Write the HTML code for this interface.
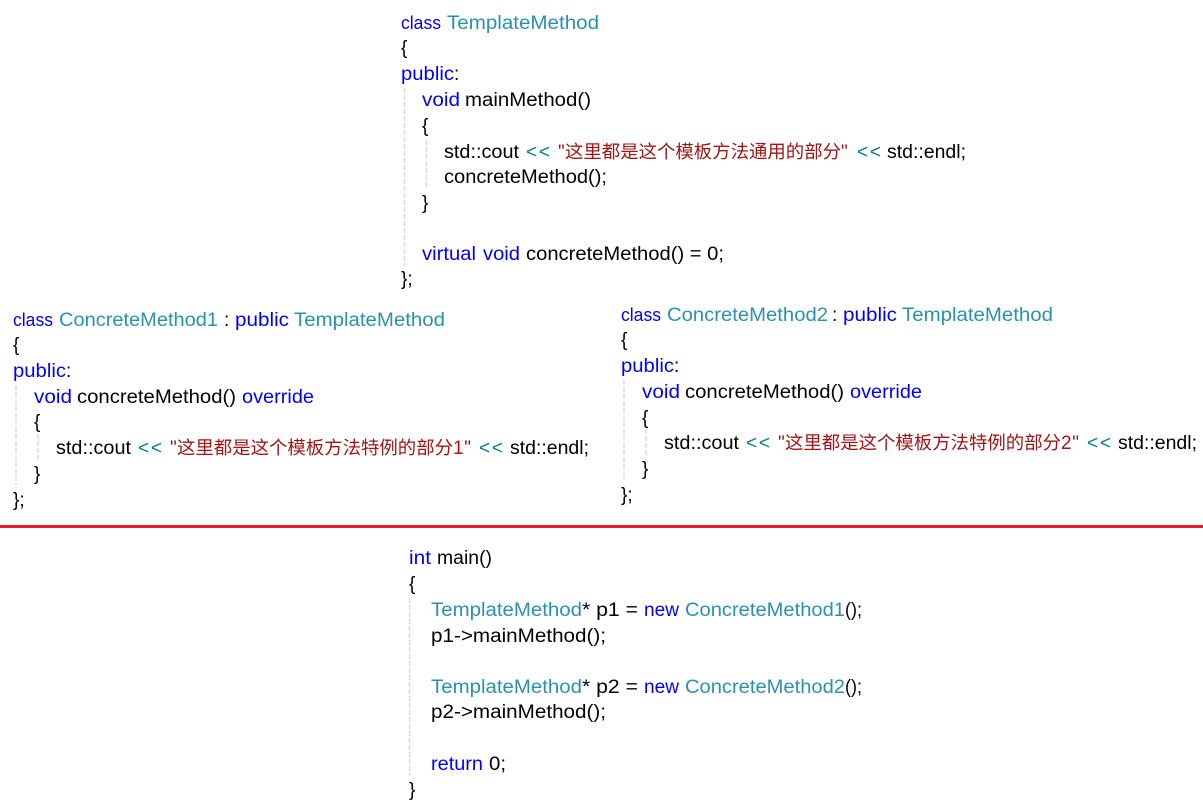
<!DOCTYPE html>
<html lang="zh-CN">
<head>
<meta charset="utf-8">
<title>Template Method</title>
<style>
html,body{margin:0;padding:0;background:#fff;width:1203px;height:811px;overflow:hidden}
svg{display:block}
text{font-family:"Liberation Sans","Noto Sans CJK SC",sans-serif;font-size:19px;white-space:pre;fill:#000}
.k{fill:#0000ff}
.n{fill:#0000ff;font-size:18.5px}
.t{fill:#2b91af}
.s{fill:#a31515}
.c{fill:#a31515;font-size:18.4px}
.o{fill:#008080}
line.g{stroke:#dadada;stroke-width:1.5;stroke-dasharray:5 2}
</style>
</head>
<body>
<svg width="1203" height="811" viewBox="0 0 1203 811" xmlns="http://www.w3.org/2000/svg">
<rect x="0" y="525" width="1203" height="3" fill="#ed1c24"/>

<!-- guides -->
<line class="g" x1="404.5" y1="88" x2="404.5" y2="266"/>
<line class="g" x1="426.5" y1="140" x2="426.5" y2="189"/>
<line class="g" x1="16" y1="385" x2="16" y2="485"/>
<line class="g" x1="38" y1="434" x2="38" y2="460"/>
<line class="g" x1="624" y1="380" x2="624" y2="480"/>
<line class="g" x1="646" y1="429" x2="646" y2="455"/>
<line class="g" x1="409.5" y1="598" x2="409.5" y2="776"/>

<!-- block 1 -->
<text class="n" x="401" y="29" textLength="40" lengthAdjust="spacingAndGlyphs">class</text>
<text class="t" x="447" y="29" textLength="152" lengthAdjust="spacingAndGlyphs">TemplateMethod</text>
<text x="401" y="54">{</text>
<text class="k" x="401" y="80" textLength="53" lengthAdjust="spacingAndGlyphs">public</text>
<text x="454" y="80">:</text>
<text class="k" x="422" y="106" textLength="38" lengthAdjust="spacingAndGlyphs">void</text>
<text x="465" y="106" textLength="126" lengthAdjust="spacingAndGlyphs">mainMethod()</text>
<text x="422" y="132">{</text>
<text x="444" y="158" textLength="75" lengthAdjust="spacingAndGlyphs">std::cout</text>
<text class="o" x="526" y="158" textLength="24" lengthAdjust="spacing">&lt;&lt;</text>
<text class="s" x="558" y="158">"</text>
<text class="c" x="565" y="158" textLength="276" lengthAdjust="spacing">这里都是这个模板方法通用的部分</text>
<text class="s" x="841" y="158">"</text>
<text class="o" x="857" y="158" textLength="24" lengthAdjust="spacing">&lt;&lt;</text>
<text x="887" y="158" textLength="79" lengthAdjust="spacingAndGlyphs">std::endl;</text>
<text x="444" y="183" textLength="163" lengthAdjust="spacingAndGlyphs">concreteMethod();</text>
<text x="422" y="209">}</text>
<text class="k" x="422" y="260" textLength="54" lengthAdjust="spacingAndGlyphs">virtual</text>
<text class="k" x="483" y="260" textLength="37" lengthAdjust="spacingAndGlyphs">void</text>
<text x="526" y="260" textLength="198" lengthAdjust="spacingAndGlyphs">concreteMethod() = 0;</text>
<text x="401" y="285">};</text>

<!-- block 2 -->
<text class="n" x="13" y="326" textLength="40" lengthAdjust="spacingAndGlyphs">class</text>
<text class="t" x="59" y="326" textLength="159" lengthAdjust="spacingAndGlyphs">ConcreteMethod1</text>
<text x="224" y="326">:</text>
<text class="k" x="235" y="326" textLength="54" lengthAdjust="spacingAndGlyphs">public</text>
<text class="t" x="294" y="326" textLength="151" lengthAdjust="spacingAndGlyphs">TemplateMethod</text>
<text x="13" y="351">{</text>
<text class="k" x="13" y="377" textLength="53" lengthAdjust="spacingAndGlyphs">public</text>
<text x="66" y="377">:</text>
<text class="k" x="34" y="403" textLength="38" lengthAdjust="spacingAndGlyphs">void</text>
<text x="77" y="403" textLength="159" lengthAdjust="spacingAndGlyphs">concreteMethod()</text>
<text class="k" x="242" y="403" textLength="72" lengthAdjust="spacingAndGlyphs">override</text>
<text x="34" y="428">{</text>
<text x="56" y="454" textLength="75" lengthAdjust="spacingAndGlyphs">std::cout</text>
<text class="o" x="138" y="454" textLength="24" lengthAdjust="spacing">&lt;&lt;</text>
<text class="s" x="170" y="454">"</text>
<text class="c" x="177" y="454" textLength="276" lengthAdjust="spacing">这里都是这个模板方法特例的部分</text>
<text class="s" x="453" y="454" textLength="18" lengthAdjust="spacing">1"</text>
<text class="o" x="479" y="454" textLength="24" lengthAdjust="spacing">&lt;&lt;</text>
<text x="510" y="454" textLength="79" lengthAdjust="spacingAndGlyphs">std::endl;</text>
<text x="34" y="480">}</text>
<text x="13" y="506">};</text>

<!-- block 3 -->
<text class="n" x="621" y="321" textLength="40" lengthAdjust="spacingAndGlyphs">class</text>
<text class="t" x="667" y="321" textLength="161" lengthAdjust="spacingAndGlyphs">ConcreteMethod2</text>
<text x="832" y="321">:</text>
<text class="k" x="843" y="321" textLength="54" lengthAdjust="spacingAndGlyphs">public</text>
<text class="t" x="902" y="321" textLength="151" lengthAdjust="spacingAndGlyphs">TemplateMethod</text>
<text x="621" y="346">{</text>
<text class="k" x="621" y="372" textLength="53" lengthAdjust="spacingAndGlyphs">public</text>
<text x="674" y="372">:</text>
<text class="k" x="642" y="398" textLength="38" lengthAdjust="spacingAndGlyphs">void</text>
<text x="685" y="398" textLength="159" lengthAdjust="spacingAndGlyphs">concreteMethod()</text>
<text class="k" x="850" y="398" textLength="72" lengthAdjust="spacingAndGlyphs">override</text>
<text x="642" y="424">{</text>
<text x="664" y="449" textLength="75" lengthAdjust="spacingAndGlyphs">std::cout</text>
<text class="o" x="746" y="449" textLength="24" lengthAdjust="spacing">&lt;&lt;</text>
<text class="s" x="778" y="449">"</text>
<text class="c" x="785" y="449" textLength="276" lengthAdjust="spacing">这里都是这个模板方法特例的部分</text>
<text class="s" x="1061" y="449" textLength="18" lengthAdjust="spacing">2"</text>
<text class="o" x="1087" y="449" textLength="24" lengthAdjust="spacing">&lt;&lt;</text>
<text x="1118" y="449" textLength="79" lengthAdjust="spacingAndGlyphs">std::endl;</text>
<text x="642" y="475">}</text>
<text x="621" y="501">};</text>

<!-- block 4 -->
<text class="k" x="409" y="564" textLength="22" lengthAdjust="spacingAndGlyphs">int</text>
<text x="437" y="564" textLength="55" lengthAdjust="spacingAndGlyphs">main()</text>
<text x="409" y="590">{</text>
<text class="t" x="431" y="616" textLength="151" lengthAdjust="spacingAndGlyphs">TemplateMethod</text>
<text x="582" y="616" textLength="56" lengthAdjust="spacingAndGlyphs">* p1 =</text>
<text class="k" x="644" y="616" textLength="35" lengthAdjust="spacingAndGlyphs">new</text>
<text class="t" x="685" y="616" textLength="160" lengthAdjust="spacingAndGlyphs">ConcreteMethod1</text>
<text x="845" y="616" textLength="17" lengthAdjust="spacingAndGlyphs">();</text>
<text x="431" y="642" textLength="175" lengthAdjust="spacingAndGlyphs">p1-&gt;mainMethod();</text>
<text class="t" x="431" y="693" textLength="151" lengthAdjust="spacingAndGlyphs">TemplateMethod</text>
<text x="582" y="693" textLength="56" lengthAdjust="spacingAndGlyphs">* p2 =</text>
<text class="k" x="644" y="693" textLength="35" lengthAdjust="spacingAndGlyphs">new</text>
<text class="t" x="685" y="693" textLength="160" lengthAdjust="spacingAndGlyphs">ConcreteMethod2</text>
<text x="845" y="693" textLength="17" lengthAdjust="spacingAndGlyphs">();</text>
<text x="431" y="718" textLength="175" lengthAdjust="spacingAndGlyphs">p2-&gt;mainMethod();</text>
<text class="k" x="431" y="770" textLength="52" lengthAdjust="spacingAndGlyphs">return</text>
<text x="489" y="770" textLength="17" lengthAdjust="spacingAndGlyphs">0;</text>
<text x="409" y="796">}</text>
</svg>
</body>
</html>
